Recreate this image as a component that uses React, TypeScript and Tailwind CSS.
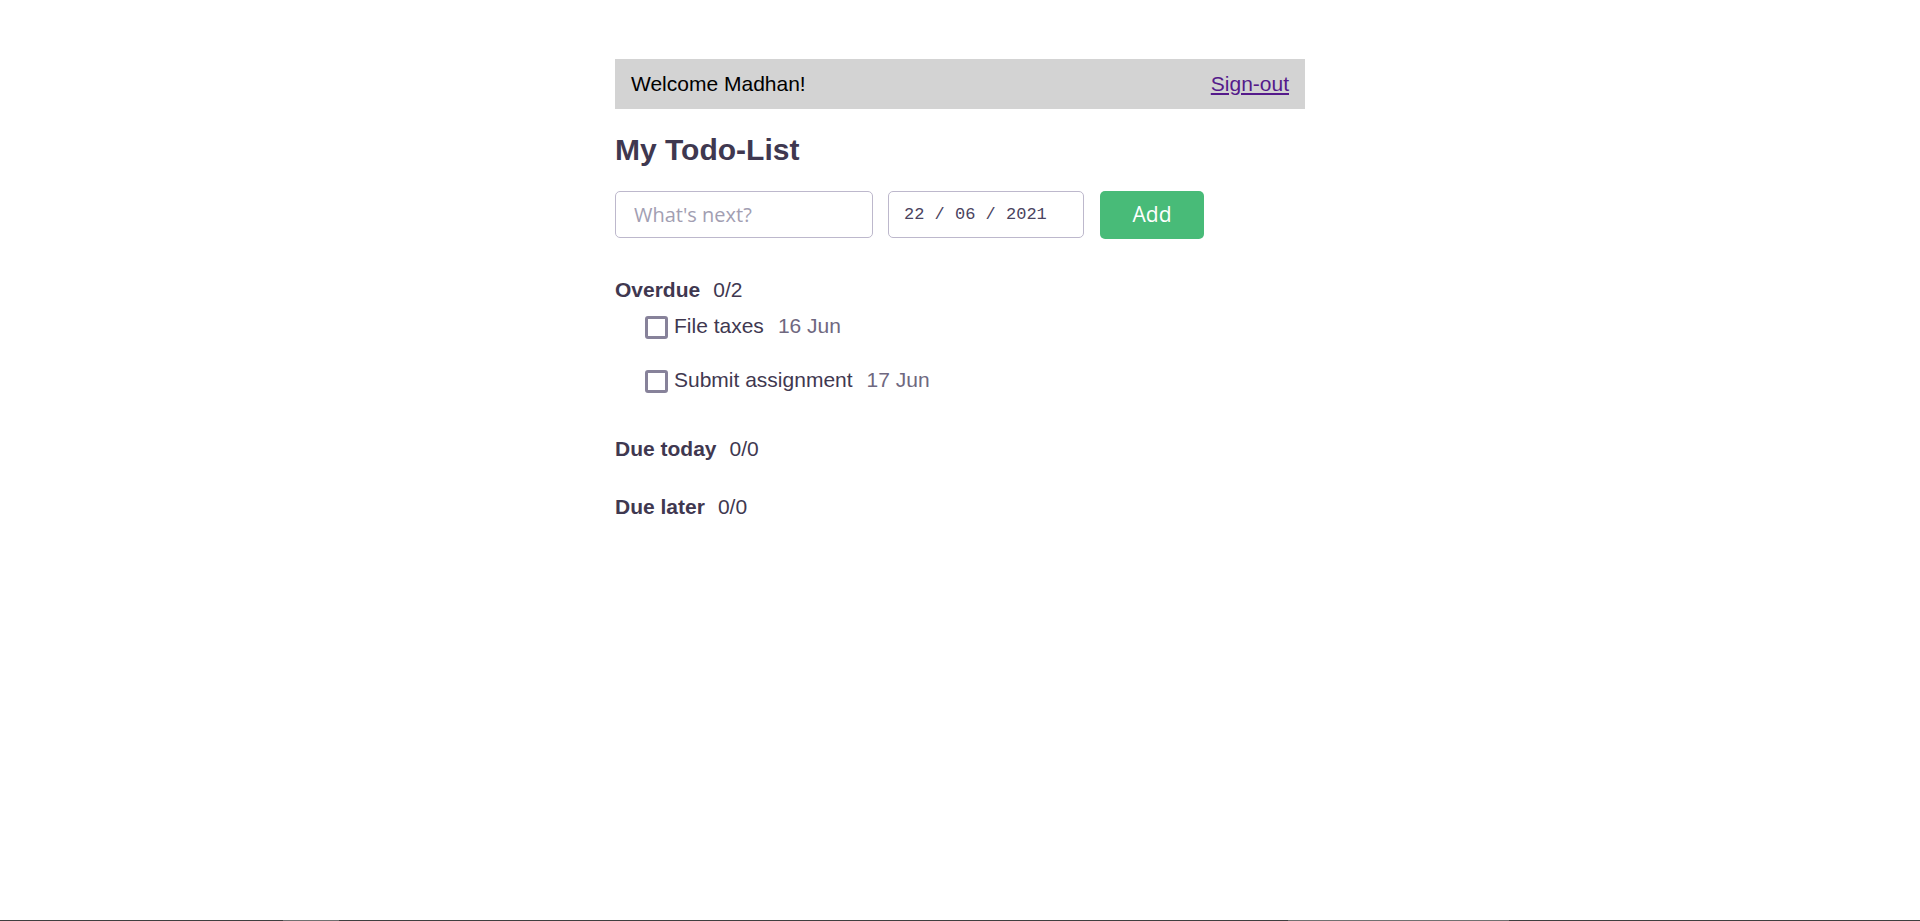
import { useState } from "react";

type Todo = { id: number; title: string; due: string; done: boolean };

const initialTodos: Todo[] = [
  { id: 1, title: "File taxes", due: "16 Jun", done: false },
  { id: 2, title: "Submit assignment", due: "17 Jun", done: false },
];

function Section({
  title,
  todos,
  onToggle,
  className,
}: {
  title: string;
  todos: Todo[];
  onToggle: (id: number) => void;
  className?: string;
}) {
  const done = todos.filter((t) => t.done).length;
  return (
    <section className={className}>
      <h3 className="text-[21px] leading-[24px] text-[#3f3850]">
        <span className="font-bold">{title}</span>
        <span className="ml-[13px]">
          {done}/{todos.length}
        </span>
      </h3>
      {todos.length > 0 && (
        <ul className="mt-3 flex flex-col gap-[30px] pl-[30px]">
          {todos.map((t) => (
            <li key={t.id} className="flex h-[24px] items-center text-[21px] leading-[24px]">
              <button
                type="button"
                onClick={() => onToggle(t.id)}
                className="mt-[2px] flex h-[23px] w-[23px] shrink-0 items-center justify-center rounded-[3px] border-[3px] border-[#87829a] bg-white"
                aria-label={t.title}
              >
                {t.done && <span className="text-[14px] leading-none text-[#3f3850]">✓</span>}
              </button>
              <span className="ml-[6px] text-[#3f3850]">{t.title}</span>
              <span className="ml-[14px] text-[#6f6880]">{t.due}</span>
            </li>
          ))}
        </ul>
      )}
    </section>
  );
}

export default function App() {
  const [todos, setTodos] = useState<Todo[]>(initialTodos);
  const [text, setText] = useState("");

  const toggle = (id: number) =>
    setTodos((ts) => ts.map((t) => (t.id === id ? { ...t, done: !t.done } : t)));

  const add = () => {
    if (!text.trim()) return;
    setTodos((ts) => [...ts, { id: Date.now(), title: text.trim(), due: "22 Jun", done: false }]);
    setText("");
  };

  return (
    <div className="flex h-[921px] flex-col overflow-hidden bg-white font-['Liberation_Sans',Arial,sans-serif]">
      <main className="flex-1 overflow-hidden pt-[59px]">
        <div className="mx-auto w-[690px]">
          <header className="flex h-[50px] items-center justify-between bg-[#d3d3d3] px-4 text-[21px] leading-[24px]">
            <span className="text-black">Welcome Madhan!</span>
            <a href="#" className="text-[#551a8b] underline">
              Sign-out
            </a>
          </header>

          <h1 className="mt-6 text-[30px] font-bold leading-[34px] text-[#3f3850]">My Todo-List</h1>

          <div className="mt-6 flex items-start font-['Open_Sans',sans-serif]">
            <input
              value={text}
              onChange={(e) => setText(e.target.value)}
              placeholder="What's next?"
              className="h-[47px] w-[258px] rounded-[5px] border border-[#bdb8cc] px-[18px] text-[20px] text-[#3f3850] outline-none placeholder:text-[#a29eb2]"
            />
            <div className="ml-[15px] flex h-[47px] w-[196px] items-center rounded-[5px] border border-[#bdb8cc] pl-[15px] font-['Liberation_Mono',monospace] text-[17px] text-[#4a4360]">
              22 / 06 / 2021
            </div>
            <button
              type="button"
              onClick={add}
              className="ml-4 h-[48px] w-[104px] rounded-[5px] bg-[#48bb78] text-[21px] text-white"
            >
              Add
            </button>
          </div>

          <Section className="mt-[39px]" title="Overdue" todos={todos} onToggle={toggle} />
          <Section className="mt-[45px]" title="Due today" todos={[]} onToggle={toggle} />
          <Section className="mt-[34px]" title="Due later" todos={[]} onToggle={toggle} />
        </div>
      </main>
      <div className="flex h-px shrink-0">
        <div className="w-[283px] bg-[#3f3f3f]" />
        <div className="w-[56px] bg-[#707070]" />
        <div className="w-[949px] bg-[#3f3f3f]" />
        <div className="w-[221px] bg-[#707070]" />
        <div className="flex-1 bg-[#3f3f3f]" />
      </div>
    </div>
  );
}
